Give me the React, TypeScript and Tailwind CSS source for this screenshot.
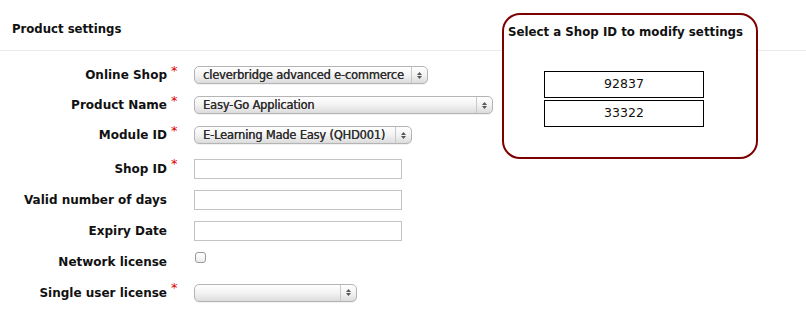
import React from 'react';

const font = { fontFamily: '"DejaVu Sans", Verdana, sans-serif' };

const Select: React.FC<{ value: string; width: string }> = ({ value, width }) => {
  return (
    <div
      className={`${width} h-[18px] flex items-stretch rounded-[5px] border border-[#b4b4b4] bg-gradient-to-b from-white via-[#f3f3f3] to-[#dcdcdc] shadow-[0_1px_0_rgba(0,0,0,0.05)]`}
    >
      <div className="flex-1 pl-[8px] text-[11.4px] leading-[17px] tracking-[-0.15px] text-[#2e2e2e] whitespace-nowrap overflow-hidden [text-shadow:0.3px_0_0_#2e2e2e]">
        {value}
      </div>
      <div className="w-[16px] border-l border-[#c8c8c8] flex flex-col items-center justify-center gap-[1px]">
        <svg width="5" height="3" viewBox="0 0 5 3"><path d="M0 3 L2.5 0 L5 3 Z" fill="#555" /></svg>
        <svg width="5" height="3" viewBox="0 0 5 3"><path d="M0 0 L2.5 3 L5 0 Z" fill="#555" /></svg>
      </div>
    </div>
  );
};

const Row: React.FC<{ label: string; required?: boolean; h: string; children: React.ReactNode }> = ({
  label,
  required,
  h,
  children,
}) => (
  <div className={`flex items-center ${h}`}>
    <div className="w-[167px] text-right text-[12px] font-bold text-[#111] whitespace-nowrap">{label}</div>
    <div className="w-[27px] pl-[4px] self-stretch flex items-center">
      {required && <span className="text-[#e00000] text-[13px] leading-none mb-[10px]">*</span>}
    </div>
    {children}
  </div>
);

const TextInput = () => <div className="w-[208px] h-[20px] border border-[#c4c4c4] bg-white" />;

export default function App() {
  return (
    <div className="relative w-[806px] h-[309px] bg-white overflow-hidden" style={font}>
      {/* header */}
      <div className="h-[51px] border-b border-[#ebebeb] flex items-end pl-[12px] pb-[11px]">
        <h2 className="text-[11.7px] font-bold text-[#111]">Product settings</h2>
      </div>

      {/* form */}
      <div className="pt-[9px]">
        <Row label="Online Shop" required h="h-[30px]">
          <Select value="cleverbridge advanced e-commerce" width="w-[234px]" />
        </Row>
        <Row label="Product Name" required h="h-[30px]">
          <Select value="Easy-Go Application" width="w-[299px]" />
        </Row>
        <Row label="Module ID" required h="h-[30px]">
          <Select value="E-Learning Made Easy (QHD001)" width="w-[218px]" />
        </Row>
        <div className="mt-[3px]">
          <Row label="Shop ID" required h="h-[31px]">
            <TextInput />
          </Row>
          <Row label="Valid number of days" h="h-[31px]">
            <TextInput />
          </Row>
          <Row label="Expiry Date" h="h-[31px]">
            <TextInput />
          </Row>
          <Row label="Network license" h="h-[31px]">
            <div className="ml-[1px] mb-[9px] w-[11px] h-[11px] rounded-[3px] border border-[#9a9a9a] bg-gradient-to-b from-white to-[#ececec]" />
          </Row>
          <Row label="Single user license" required h="h-[31px]">
            <Select value="" width="w-[163px]" />
          </Row>
        </div>
      </div>

      {/* shop id selector box */}
      <div className="absolute left-[502px] top-[13px] w-[256px] h-[146px] rounded-[18px] border-2 border-[#7d0000] bg-white">
        <div className="pl-[4px] pt-[9px] text-[11.8px] font-bold text-[#111] whitespace-nowrap">
          Select a Shop ID to modify settings
        </div>
        <div className="mt-[29px] flex flex-col items-center gap-[2px] pr-[12px]">
          <div className="w-[160px] h-[27px] border border-black flex items-center justify-center text-[12.5px] text-[#111]">
            92837
          </div>
          <div className="w-[160px] h-[27px] border border-black flex items-center justify-center text-[12.5px] text-[#111]">
            33322
          </div>
        </div>
      </div>
    </div>
  );
}
